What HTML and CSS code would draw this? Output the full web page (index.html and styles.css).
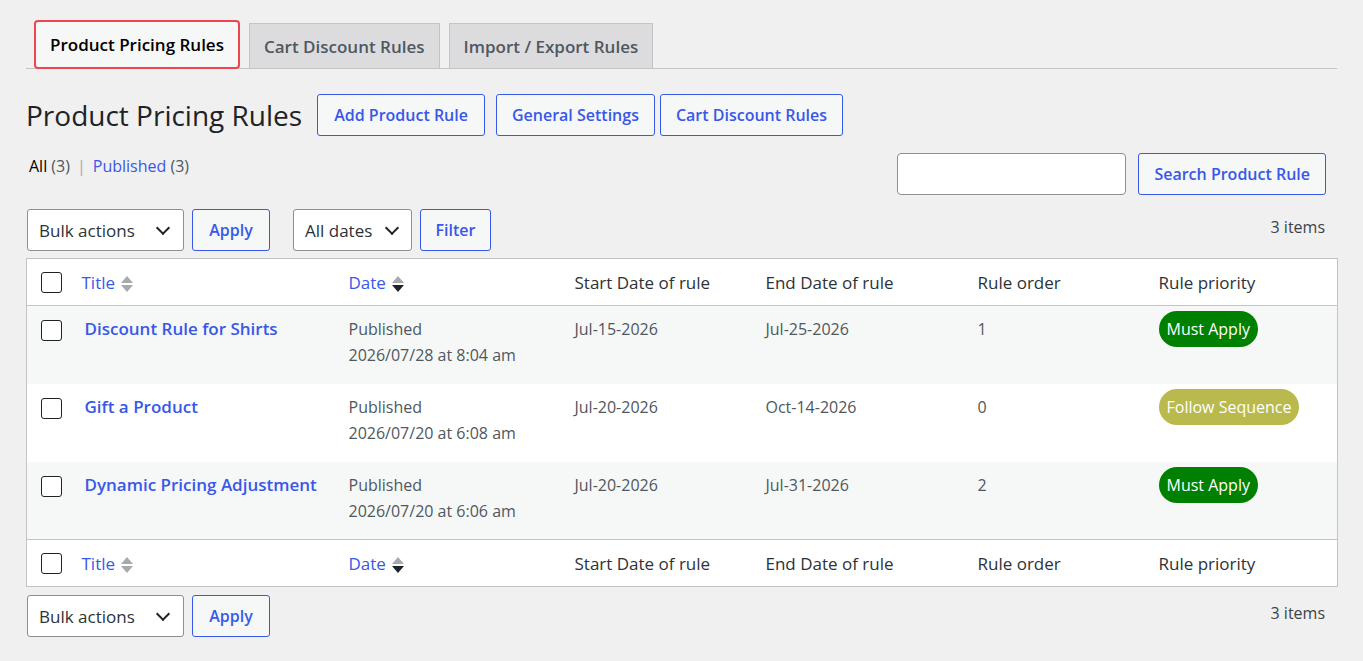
FILE: index.html
```html
<!DOCTYPE html>
<html lang="en">
<head>
<meta charset="UTF-8">
<title>Product Pricing Rules</title>
<link rel="stylesheet" href="styles.css">
</head>
<body>
<div class="wrap">
    <!-- Onglets -->
    <nav class="tabs">
        <a class="tab active">Product Pricing Rules</a>
        <a class="tab">Cart Discount Rules</a>
        <a class="tab">Import / Export Rules</a>
    </nav>

    <div class="page-head">
        <h1>Product Pricing Rules</h1>
        <a class="btn first">Add Product Rule</a>
        <a class="btn">General Settings</a>
        <a class="btn tight">Cart Discount Rules</a>
    </div>

    <div class="status-row">
        <ul class="subsubsub">
            <li><b>All</b> <span class="count">(3)</span></li>
            <li class="sep">|</li>
            <li><a>Published</a> <span class="count">(3)</span></li>
        </ul>
        <div class="search-box">
            <input type="text" class="search-input">
            <a class="btn">Search Product Rule</a>
        </div>
    </div>

    <div class="tablenav">
        <div class="select bulk">Bulk actions <span class="chev"></span></div>
        <a class="btn small">Apply</a>
        <div class="select dates">All dates <span class="chev"></span></div>
        <a class="btn small filter">Filter</a>
        <span class="items">3 items</span>
    </div>

    <table class="rules">
        <colgroup>
            <col class="c-cb"><col class="c-title"><col class="c-date"><col class="c-start">
            <col class="c-end"><col class="c-order"><col class="c-prio">
        </colgroup>
        <thead>
            <tr>
                <th class="cb"><span class="box"></span></th>
                <th><a>Title</a> <span class="sort"><i class="up"></i><i class="down"></i></span></th>
                <th><a>Date</a> <span class="sort"><i class="up"></i><i class="down on"></i></span></th>
                <th>Start Date of rule</th>
                <th>End Date of rule</th>
                <th>Rule order</th>
                <th>Rule priority</th>
            </tr>
        </thead>
        <tbody>
            <tr class="alt">
                <td class="cb"><span class="box"></span></td>
                <td class="name"><a>Discount Rule for Shirts</a></td>
                <td>Published<br>2026/07/28 at 8:04 am</td>
                <td>Jul-15-2026</td>
                <td>Jul-25-2026</td>
                <td>1</td>
                <td><span class="badge must">Must Apply</span></td>
            </tr>
            <tr>
                <td class="cb"><span class="box"></span></td>
                <td class="name"><a>Gift a Product</a></td>
                <td>Published<br>2026/07/20 at 6:08 am</td>
                <td>Jul-20-2026</td>
                <td>Oct-14-2026</td>
                <td>0</td>
                <td><span class="badge follow">Follow Sequence</span></td>
            </tr>
            <tr class="alt">
                <td class="cb"><span class="box"></span></td>
                <td class="name"><a>Dynamic Pricing Adjustment</a></td>
                <td>Published<br>2026/07/20 at 6:06 am</td>
                <td>Jul-20-2026</td>
                <td>Jul-31-2026</td>
                <td>2</td>
                <td><span class="badge must">Must Apply</span></td>
            </tr>
        </tbody>
        <tfoot>
            <tr>
                <th class="cb"><span class="box"></span></th>
                <th><a>Title</a> <span class="sort"><i class="up"></i><i class="down"></i></span></th>
                <th><a>Date</a> <span class="sort"><i class="up"></i><i class="down on"></i></span></th>
                <th>Start Date of rule</th>
                <th>End Date of rule</th>
                <th>Rule order</th>
                <th>Rule priority</th>
            </tr>
        </tfoot>
    </table>

    <div class="tablenav bottom">
        <div class="select bulk">Bulk actions <span class="chev"></span></div>
        <a class="btn small">Apply</a>
        <span class="items">3 items</span>
    </div>
</div>
</body>
</html>
```
FILE: styles.css
```css
/* Styles généraux */
body {
    margin: 0;
    background: #f0f0f1;
    font-family: "Open Sans", "Noto Sans", sans-serif;
    font-size: 16px;
    color: #3c434a;
}

.wrap {
    padding: 21px 26px 0 26px;
}

a {
    color: #3858e9;
    text-decoration: none;
}

/* Onglets */
.tabs {
    display: flex;
    align-items: flex-end;
    gap: 9px;
    padding-left: 8px;
    border-bottom: 1px solid #c3c4c7;
    height: 47px;
}
.tab {
    display: flex;
    align-items: center;
    height: 44px;
    padding: 0 14px;
    background: #dcdcde;
    border: 1px solid #c3c4c7;
    border-bottom: none;
    color: #50575e;
    font-size: 17px;
    font-weight: 600;
}
.tab.active {
    height: 45px;
    background: #f6f7f7;
    color: #000;
    border: 2px solid #f0454f;
    border-radius: 4px;
    margin-bottom: -1px;
}

/* En-tête */
.page-head {
    display: flex;
    align-items: center;
    gap: 11px;
    margin-top: 25px;
}
.page-head h1 {
    margin: 0 4px 0 0;
    font-size: 28px;
    font-weight: 400;
    color: #1d2327;
}
.page-head .btn.first {
    padding: 0 16px;
}
.page-head .btn.tight {
    margin-left: -6px;
}

.btn {
    display: inline-flex;
    align-items: center;
    justify-content: center;
    box-sizing: border-box;
    height: 42px;
    padding: 0 15px;
    border: 1px solid #3858e9;
    border-radius: 3px;
    background: #f6f7f7;
    font-size: 16px;
    font-weight: 600;
    color: #3858e9;
}

/* Liens de statut + recherche */
.status-row {
    display: flex;
    justify-content: space-between;
    align-items: flex-start;
    margin-top: 17px;
}
.subsubsub {
    list-style: none;
    margin: 2px 0 0 3px;
    padding: 0;
    display: flex;
    gap: 7px;
    color: #50575e;
}
.subsubsub b {
    color: #000;
    font-weight: 500;
}
.subsubsub .sep {
    color: #a7aaad;
}
.search-box {
    display: flex;
    gap: 12px;
    margin-right: 11px;
}
.search-input {
    box-sizing: border-box;
    width: 229px;
    height: 42px;
    border: 1px solid #8c8f94;
    border-radius: 4px;
    background: #fff;
}

/* Barre d'actions */
.tablenav {
    display: flex;
    align-items: center;
    gap: 8px;
    margin-top: 14px;
    height: 42px;
}
.select {
    box-sizing: border-box;
    height: 42px;
    display: flex;
    align-items: center;
    justify-content: space-between;
    padding: 0 11px;
    background: #fff;
    border: 1px solid #8c8f94;
    border-radius: 3px;
    color: #2c3338;
    font-size: 17px;
    margin-left: 1px;
}
.select.bulk {
    width: 157px;
}
.select.dates {
    width: 119px;
    margin-left: 15px;
    padding-right: 10px;
}
.chev {
    width: 8px;
    height: 8px;
    border-right: 2px solid #1d2327;
    border-bottom: 2px solid #1d2327;
    transform: rotate(45deg);
    margin-top: -5px;
    margin-right: 4px;
}
.btn.small {
    width: 78px;
    padding: 0;
}
.btn.small.filter {
    width: 71px;
}
.items {
    margin-left: auto;
    margin-right: 12px;
    margin-top: -7px;
    color: #3c434a;
}

/* Tableau */
.rules {
    width: 1311px;
    margin-top: 7px;
    border-collapse: collapse;
    table-layout: fixed;
    background: #fff;
    border: 1px solid #c3c4c7;
}
.c-cb { width: 44px; }
.c-title { width: 267px; }
.c-date { width: 226px; }
.c-start { width: 191px; }
.c-end { width: 212px; }
.c-order { width: 181px; }
.c-prio { width: 190px; }

.rules th {
    text-align: left;
    font-weight: 400;
    height: 46px;
    padding: 0 11px;
    color: #2c3338;
    font-size: 17px;
}
.rules thead th {
    border-bottom: 1px solid #c3c4c7;
}
.rules tfoot th {
    border-top: 1px solid #c3c4c7;
}
.rules th.cb,
.rules td.cb {
    padding: 0 0 0 14px;
}
.rules td {
    vertical-align: top;
    height: 78px;
    box-sizing: border-box;
    padding: 10px 11px 0;
    line-height: 26px;
    color: #50575e;
}
.rules td.cb {
    padding-top: 14px;
}
.rules tr.alt td {
    background: #f6f7f7;
}
.rules td.name {
    padding-left: 14px;
}
.rules td.name a {
    font-weight: 600;
    font-size: 17px;
}

.box {
    display: block;
    width: 21px;
    height: 21px;
    box-sizing: border-box;
    border: 1px solid #1d2327;
    border-radius: 3px;
    background: #fff;
}

/* Flèches de tri */
.sort {
    display: inline-flex;
    flex-direction: column;
    gap: 2px;
    vertical-align: middle;
    margin-left: 2px;
}
.sort i {
    width: 0;
    height: 0;
    border-left: 6px solid transparent;
    border-right: 6px solid transparent;
}
.sort .up {
    border-bottom: 7px solid #a7aaad;
}
.sort .down {
    border-top: 7px solid #a7aaad;
}
.sort .down.on {
    border-top-color: #1d2327;
}

/* Badges de priorité */
.badge {
    display: inline-block;
    margin-top: -8px;
    padding: 5px 8px;
    border-radius: 18px;
    color: #fff;
    font-size: 16px;
    line-height: 26px;
}
.badge.must {
    background: #008000;
}
.badge.follow {
    background: #b9b94d;
}

.tablenav.bottom {
    margin-top: 8px;
}
```
